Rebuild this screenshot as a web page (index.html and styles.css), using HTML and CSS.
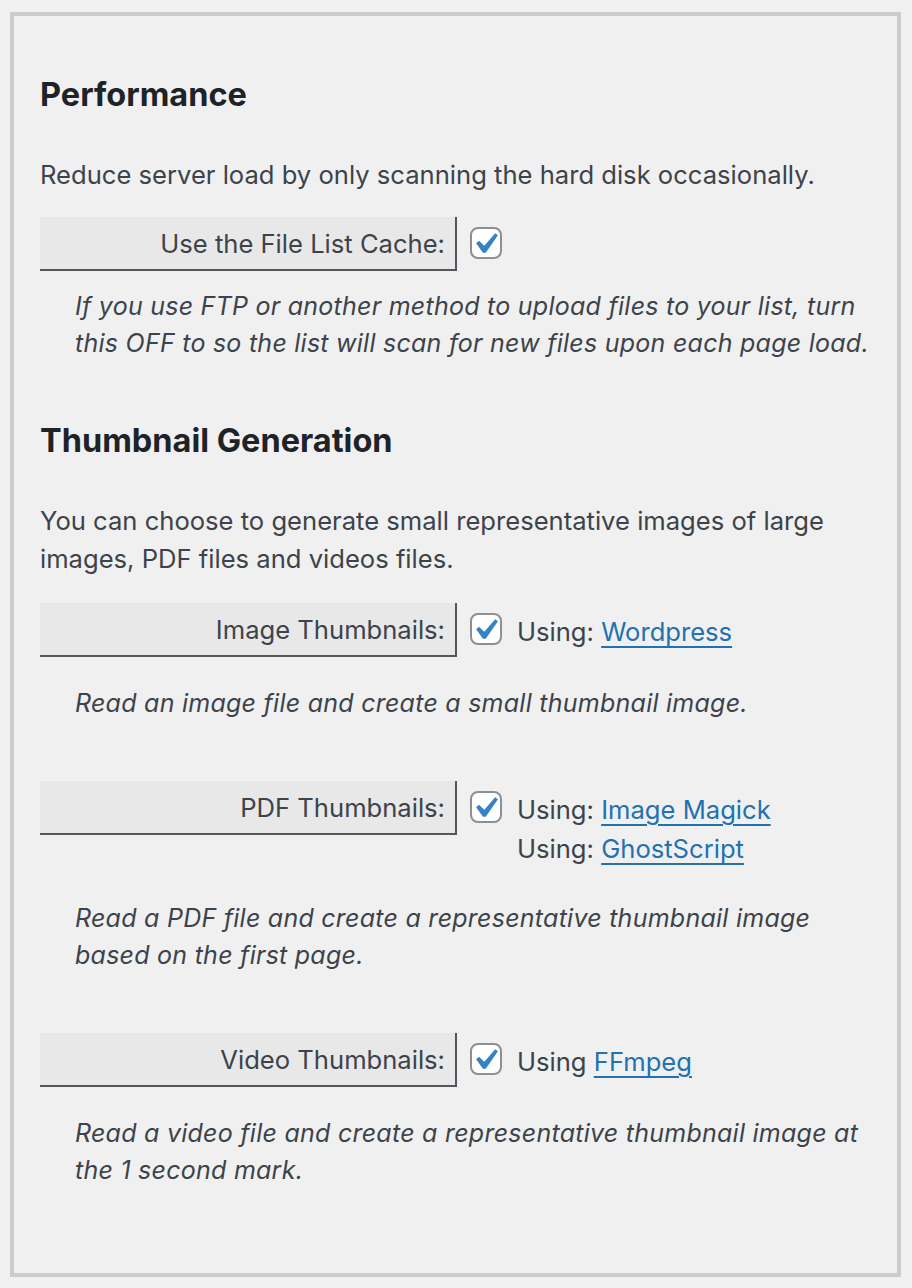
FILE: index.html
```html
<!DOCTYPE html>
<html lang="en">
<head>
<meta charset="utf-8">
<title>Settings</title>
<link rel="stylesheet" href="styles.css">
</head>
<body>
<div class="panel">
  <h2 class="title">Performance</h2>
  <p class="intro">Reduce server load by only scanning the hard disk occasionally.</p>
  <div class="setting">
    <div class="label">Use the File List Cache:</div>
    <div class="control">
      <span class="check"><svg viewBox="0 0 20 20" width="42" height="42"><path fill="#3582c4" d="M14.83 4.89l1.34.94-5.81 8.38H9.02L5.78 9.67l1.34-1.25 2.57 2.4z"/></svg></span>
    </div>
  </div>
  <p class="desc desc-first">If you use FTP or another method to upload files to your list, turn this OFF to so the list will scan for new files upon each page load.</p>

  <h2 class="title title-second">Thumbnail Generation</h2>
  <p class="intro">You can choose to generate small representative images of large images, PDF files and videos files.</p>

  <div class="setting setting-first">
    <div class="label">Image Thumbnails:</div>
    <div class="control">
      <span class="check"><svg viewBox="0 0 20 20" width="42" height="42"><path fill="#3582c4" d="M14.83 4.89l1.34.94-5.81 8.38H9.02L5.78 9.67l1.34-1.25 2.57 2.4z"/></svg></span>
      <div class="using">
        <div class="line">Using: <a href="#">Wordpress</a></div>
      </div>
    </div>
  </div>
  <p class="desc">Read an image file and create a small thumbnail image.</p>

  <div class="setting">
    <div class="label">PDF Thumbnails:</div>
    <div class="control">
      <span class="check"><svg viewBox="0 0 20 20" width="42" height="42"><path fill="#3582c4" d="M14.83 4.89l1.34.94-5.81 8.38H9.02L5.78 9.67l1.34-1.25 2.57 2.4z"/></svg></span>
      <div class="using">
        <div class="line">Using: <a href="#">Image Magick</a></div>
        <div class="line">Using: <a href="#">GhostScript</a></div>
      </div>
    </div>
  </div>
  <p class="desc desc-tall">Read a PDF file and create a representative thumbnail image based on the first page.</p>

  <div class="setting">
    <div class="label">Video Thumbnails:</div>
    <div class="control">
      <span class="check"><svg viewBox="0 0 20 20" width="42" height="42"><path fill="#3582c4" d="M14.83 4.89l1.34.94-5.81 8.38H9.02L5.78 9.67l1.34-1.25 2.57 2.4z"/></svg></span>
      <div class="using">
        <div class="line">Using <a href="#">FFmpeg</a></div>
      </div>
    </div>
  </div>
  <p class="desc">Read a video file and create a representative thumbnail image at the 1 second mark.</p>
</div>
</body>
</html>
```

FILE: styles.css
```css
html, body {
  margin: 0;
  padding: 0;
  background: #f0f0f0;
}

body {
  font-family: Inter, "Noto Sans", "Liberation Sans", sans-serif;
  color: #3c434a;
}

.panel {
  box-sizing: border-box;
  width: 891px;
  height: 1265px;
  margin: 12px 0 0 10px;
  border: 4px solid #cccccc;
  background: #f0f0f0;
  padding: 57px 12px 0 26px;
}

.title {
  margin: 0;
  font-size: 32.5px;
  line-height: 44px;
  font-weight: 700;
  color: #1d2327;
}

.title-second {
  margin-top: 57px;
}

.intro {
  margin: 39px 14px 0 0;
  font-size: 25.6px;
  line-height: 38px;
}

.setting {
  display: flex;
  align-items: flex-start;
  margin-top: 23px;
}

.setting-first {
  margin-top: 25px;
}

.desc + .setting {
  margin-top: 59px;
}

.label {
  box-sizing: border-box;
  flex: 0 0 417px;
  height: 54px;
  background: #e8e8e8;
  border-right: 2px solid #50575e;
  border-bottom: 2px solid #50575e;
  display: flex;
  align-items: center;
  justify-content: flex-end;
  padding-right: 10px;
  font-size: 25.6px;
}

.control {
  display: flex;
  align-items: flex-start;
  padding-top: 10px;
  margin-left: 13px;
}

.check {
  position: relative;
  box-sizing: border-box;
  flex: 0 0 32px;
  width: 32px;
  height: 32px;
  border: 2px solid #8c8f94;
  border-radius: 8px;
  background: #ffffff;
}

.check svg {
  position: absolute;
  left: -8px;
  top: -6px;
}

.using {
  margin-left: 15px;
  font-size: 25.6px;
  line-height: 39px;
  margin-top: -1px;
}

.using a {
  color: #2271b1;
  text-decoration: underline;
  text-decoration-thickness: 2px;
  text-underline-offset: 5px;
}

.desc {
  margin: 28px 0 0 35px;
  font-size: 25px;
  letter-spacing: 0.25px;
  line-height: 37px;
  font-style: italic;
}

.desc-first {
  margin-top: 17px;
}

.desc-tall {
  margin-top: 32px;
}
```
